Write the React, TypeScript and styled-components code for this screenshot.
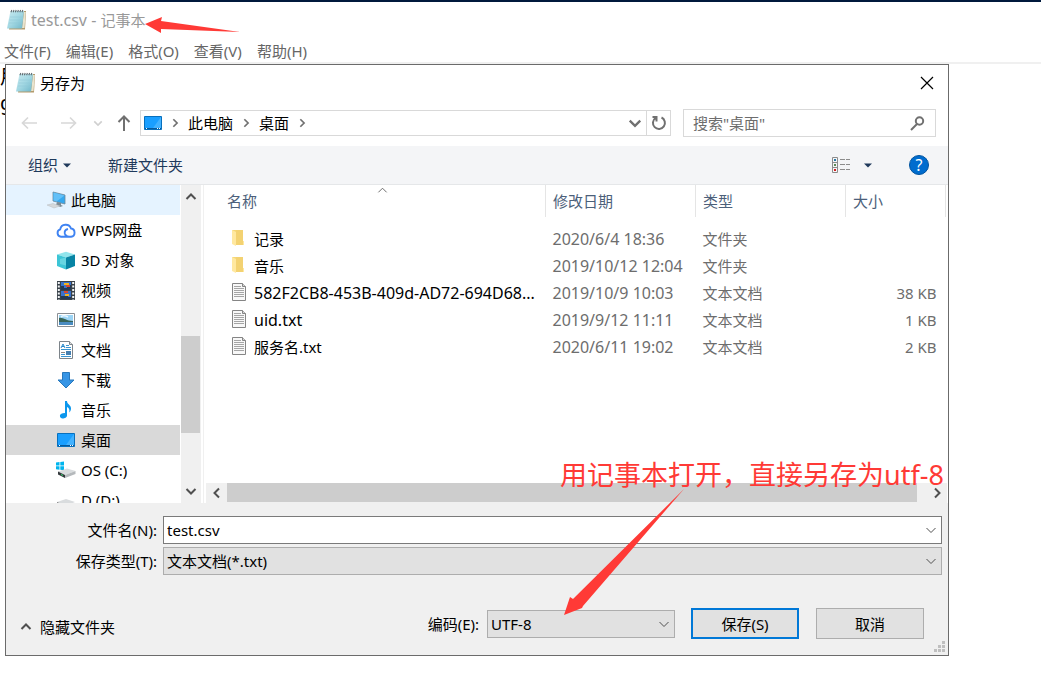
import React from "react";
import styled, { createGlobalStyle, css } from "styled-components";

const Global = createGlobalStyle`
  * { box-sizing: border-box; }
  html, body { margin: 0; background: #fff; }
  body, button, input, select, textarea {
    font-family: "Noto Sans", "Noto Sans CJK SC", sans-serif;
    font-size: 15px;
    line-height: 20px;
    color: #000;
  }
  button { border: 0; background: none; padding: 0; }
  svg { display: block; flex: none; }
`;

const Desktop = styled.div`
  position: relative;
  min-width: 900px;
  min-height: 100vh;
  overflow: hidden;
  border-top: 2px solid #00193c;
`;

const AppTitle = styled.header`
  display: flex;
  align-items: center;
  gap: 4px;
  height: 36px;
  padding-left: 7px;
  color: #999;
  span { white-space: pre; }
`;

const Latin = styled.span`
  font-size: 16px;
`;

const MenuBar = styled.nav`
  display: flex;
  gap: 15px;
  height: 26px;
  padding: 2px 0 0 4px;
  border-bottom: 2px solid #f0f0f0;
  button { color: #666; }
`;

const Editor = styled.textarea`
  display: block;
  width: 100%;
  height: 500px;
  padding: 0;
  border: 0;
  outline: 0;
  resize: none;
  font-size: 20px;
  line-height: 26px;
`;

const Dialog = styled.section`
  position: absolute;
  top: 62px;
  left: 5px;
  right: 92px;
  border: 1px solid #6b6b6b;
  background: #fff;
`;

const DialogTitle = styled.header`
  display: flex;
  align-items: center;
  gap: 4px;
  height: 36px;
  padding: 0 14px 0 10px;
  h1 { flex: 1; margin: 0; font-size: 15px; font-weight: 400; }
`;

const NavRow = styled.div`
  display: flex;
  align-items: center;
  height: 45px;
  padding: 0 12px 1px 14px;
`;

const NavButtons = styled.div`
  display: flex;
  align-items: center;
  gap: 14px;
  width: 120px;
`;

const AddressBar = styled.div`
  display: flex;
  align-items: stretch;
  flex: 1;
  height: 26px;
  border: 1px solid #d9d9d9;
`;

const Crumbs = styled.div`
  display: flex;
  align-items: center;
  flex: 1;
  gap: 8px;
  padding: 0 4px 0 3px;
  > :last-child { margin-left: auto; }
`;

const Refresh = styled.button`
  display: grid;
  place-items: center;
  width: 24px;
  border-left: 1px solid #d9d9d9;
`;

const SearchBox = styled.label`
  display: flex;
  align-items: center;
  width: 253px;
  height: 28px;
  margin-left: 12px;
  padding: 0 10px 0 9px;
  border: 1px solid #d9d9d9;
  input {
    flex: 1;
    min-width: 0;
    padding: 0;
    border: 0;
    outline: 0;
    background: none;
  }
  input::placeholder { color: #6d6d6d; opacity: 1; }
`;

const ToolBar = styled.div`
  display: flex;
  align-items: center;
  height: 39px;
  padding: 0 19px 0 22px;
  border-bottom: 1px solid #e5e7e9;
  background: #f4f5f7;
`;

const ToolButton = styled.button<{ $end?: boolean }>`
  display: flex;
  align-items: center;
  gap: 5px;
  margin-right: 37px;
  color: #1e395b;
  ${(p) => p.$end && css`margin-left: auto; gap: 13px;`}
`;

const HelpButton = styled.button`
  width: 20px;
  height: 20px;
  border: 1px solid #00539f;
  border-radius: 50%;
  background: #006cce;
  color: #fff;
  font-size: 16px;
  line-height: 18px;
`;

const Browser = styled.div`
  display: flex;
  height: 318px;
`;

const Tree = styled.ul`
  width: 174px;
  margin: 0;
  padding: 0;
  overflow: hidden;
  list-style: none;
`;

const TreeItem = styled.li<{ $tone?: string; $root?: boolean }>`
  display: flex;
  align-items: center;
  gap: 5px;
  height: 30px;
  padding-left: ${(p) => (p.$root ? 40 : 50)}px;
  background: ${(p) => p.$tone ?? "none"};
`;

const TreeIconSlot = styled.span`
  display: grid;
  place-items: center;
  width: 20px;
`;

const VScroll = styled.div`
  display: flex;
  flex-direction: column;
  align-items: center;
  width: 20px;
  margin-left: 1px;
  padding: 6px 1px 6px 0;
  background: #f0f0f0;
`;

const VThumb = styled.div`
  width: 19px;
  height: 97px;
  margin: 133px 0 auto;
  background: #cdcdcd;
`;

const Files = styled.div`
  display: flex;
  flex-direction: column;
  flex: 1;
  min-width: 0;
  margin-left: 2px;
  border-left: 1px solid #f0f0f0;
`;

const FileTable = styled.table`
  width: calc(100% - 2px);
  border-collapse: collapse;
  table-layout: fixed;
  th, td { padding: 0 9px 0 7px; font-weight: 400; text-align: left; }
  th {
    position: relative;
    height: 32px;
    border-right: 1px solid #e5e5e5;
    color: #4c607a;
  }
  th:first-child { padding-left: 23px; }
  td { height: 27px; color: #6d6d6d; white-space: nowrap; }
  td:first-child { padding: 0 0 0 27px; color: #000; }
  td:last-child { text-align: right; }
  thead::after { content: ""; display: block; height: 8px; }
`;

const SortMark = styled.span`
  position: absolute;
  top: 0;
  left: calc(50% + 2px);
`;

const FileName = styled.span`
  display: flex;
  align-items: center;
  gap: 7px;
`;

const HScroll = styled.div`
  display: flex;
  align-items: center;
  height: 20px;
  margin: auto 1px 0 2px;
  padding-bottom: 1px;
  background: #f0f0f0;
  button { display: grid; place-items: center; width: 21px; }
`;

const HThumb = styled.div`
  flex: 1;
  height: 19px;
  margin-right: 9px;
  background: #cdcdcd;
`;

const Footer = styled.form`
  position: relative;
  padding: 13px 6px 16px 0;
  background: #f0f0f0;
`;

const Field = styled.div`
  display: flex;
  align-items: center;
  height: 28px;
  margin-bottom: 3px;
  label { width: 157px; padding-right: 6px; text-align: right; }
`;

const Control = styled.div<{ $white?: boolean; $width?: number }>`
  display: flex;
  align-items: center;
  flex: ${(p) => (p.$width ? "none" : 1)};
  width: ${(p) => (p.$width ? `${p.$width}px` : "auto")};
  height: 28px;
  padding-right: 4px;
  border: 1px solid ${(p) => (p.$white ? "#7a7a7a" : "#adadad")};
  background: ${(p) => (p.$white ? "#fff" : "#e1e1e1")};
  input, select {
    flex: 1;
    min-width: 0;
    height: 26px;
    padding: 0 0 0 3px;
    border: 0;
    outline: 0;
    appearance: none;
    background: none;
  }
`;

const Actions = styled.div`
  display: flex;
  align-items: center;
  height: 31px;
  margin-top: 33px;
  padding: 0 18px 0 14px;
  label { margin-right: 8px; }
`;

const HideFolders = styled.button`
  display: flex;
  align-items: center;
  gap: 8px;
  margin: 6px auto 0 0;
`;

const PushButton = styled.button<{ $primary?: boolean }>`
  width: 108px;
  height: 31px;
  margin-left: ${(p) => (p.$primary ? 16 : 17)}px;
  border: ${(p) => (p.$primary ? "2px solid #0078d7" : "1px solid #adadad")};
  background: #e1e1e1;
`;

const Grip = styled.svg`
  position: absolute;
  right: 2px;
  bottom: 2px;
`;

const Note = styled.p`
  position: absolute;
  top: 455px;
  left: 560px;
  margin: 0;
  color: #ff3a36;
  font-size: 27px;
  line-height: 36px;
  white-space: nowrap;
`;

const Arrow = styled.svg`
  position: absolute;
  top: -2px;
  left: 0;
  pointer-events: none;
`;

type ChevronProps = { dir: "up" | "down" | "left" | "right"; size?: number; color?: string; weight?: number };
const turns = { up: 180, down: 0, left: 90, right: 270 };
const Chevron = ({ dir, size = 12, color = "#505050", weight = 2 }: ChevronProps) => (
  <svg width={size} height={size} viewBox="0 0 12 12" fill="none" stroke={color} strokeWidth={weight}>
    <path d="M1.500 4 6 8.500 10.500 4" transform={`rotate(${turns[dir]} 6 6)`} />
  </svg>
);

const Triangle = () => (
  <svg width="8" height="5" viewBox="0 0 8 5"><path d="M0 .5h8L4 4.500z" fill="#1e395b" /></svg>
);

const NotepadIcon = () => (
  <svg width="20" height="22" viewBox="0 0 20 22">
    <defs>
      <linearGradient id="pad" x1="0" y1="0" x2="1" y2="1">
        <stop offset="0" stopColor="#c9eaf0" />
        <stop offset=".5" stopColor="#a3d8e3" />
        <stop offset="1" stopColor="#6fb6c9" />
      </linearGradient>
    </defs>
    <path d="M4 2h15l-1 18.500H2z" fill="#b39a6b" />
    <path d="M17 3h1.800l-1.300 16H15z" fill="#e9e4cf" />
    <path d="M3.500 2H17l-2 17.500H0z" fill="url(#pad)" />
    <path d="M3 8h13M2.500 11h13M2 14h13" stroke="#8cc7d5" strokeWidth=".5" />
    <path d="M4 3.200 4.800 1M6.200 3.200 7 1M8.400 3.200 9.200 1M10.600 3.200l.8-2.200M12.800 3.200l.8-2.200M15 3.200l.8-2.200" stroke="#616b70" strokeWidth="1.100" />
  </svg>
);

const DesktopIcon = () => (
  <svg width="18" height="14" viewBox="0 0 18 14">
    <path d="M.5.5h17v13H.5z" fill="#1a9fff" stroke="#0870bd" />
    <path d="m17 1-8 11h8z" fill="#43b2ff" />
    <path d="M1 12.500h16" stroke="#07599b" />
    <path d="M2 12.500h1M13 12.500h1M15 12.500h1" stroke="#fff" />
  </svg>
);

const treeIcons: Record<string, React.ReactNode> = {
  pc: (
    <>
      <path d="m6 1 12 3v9L6 10z" fill="#35a8ef" stroke="#6f8898" strokeWidth=".8" />
      <path d="m6.500 1.500 11 3-8 6-3-1z" fill="#62c0f8" />
      <path d="m10 11 4 1v2l2 1-3 1-4-2z" fill="#7c8b94" />
      <path d="m0 14 6-1.500 7 2.500-6 2z" fill="#d5d8da" stroke="#b8bcc0" strokeWidth=".5" />
    </>
  ),
  cloud: (
    <>
      <path d="M12 15.800H4a3.800 3.800 0 0 1-.8-7.400A5.600 5.600 0 0 1 14 7.500a4.200 4.200 0 0 1 0 8.300H12c-2 0-3.200-1-4.200-2.800" fill="none" stroke="#3f83f2" strokeWidth="1.900" />
      <path d="M7.800 13c-.5-2.500 1-4.500 3.200-5" fill="none" stroke="#3f83f2" strokeWidth="1.800" />
    </>
  ),
  cube: (
    <>
      <path d="m0 3.500 9-2.800 9 2.800-9 3z" fill="#91e5ec" />
      <path d="m0 3.500 9 3V18.500l-9-3.500z" fill="#3cc5d6" />
      <path d="m18 3.500-9 3V18.500l9-3.500z" fill="#0784a4" />
      <path d="m3 8 6-1.500v8L3 13z" fill="#78dbe5" opacity=".7" />
    </>
  ),
  video: (
    <>
      <path d="M0 0h18v19H0z" fill="#39424a" />
      <path d="M4 1h10v8H4zM4 10h10v8H4z" fill="#3a72cb" />
      <path d="M4 5h3v2h3V4h4v5H4zM4 15h4v-2h3v3h3v2H4z" fill="#243a54" />
      <path d="M7 2h5v2H7zM8 13h4v2H8z" fill="#f1b51f" />
      <path d="M9 4h4v2H9zM7 10h4v2H7z" fill="#d64632" />
      <path d="M1.800 1v18M16.200 1v18" stroke="#f1f3f4" strokeWidth="2" strokeDasharray="2 1.500" />
    </>
  ),
  picture: (
    <>
      <path d="M.5 2.500h17v13H.5z" fill="#fff" stroke="#8a8f94" />
      <path d="M2 4h14v10H2z" fill="#9bd4f5" />
      <path d="M2 7c4-1 7 3 14 3v2H2z" fill="#376458" />
      <path d="M2 11h14v3H2z" fill="#4a8cc1" />
      <path d="M4 6c2-2 5-1 7 0" stroke="#e8f7ff" strokeWidth="1.500" fill="none" />
    </>
  ),
  document: (
    <>
      <path d="M2.500.5h10l3 3v14h-13z" fill="#fff" stroke="#7d848a" />
      <path d="M12.500.5v3h3" fill="#ddd" stroke="#7d848a" />
      <path d="m4 7 2-4 2 4M5 5.500h2" fill="none" stroke="#2688ca" />
      <path d="M9 4.500h3M9 6.500h5M4 8.500h10M4 13.500h4M4 15.500h10" stroke="#3a95d1" />
      <path d="M4 11.500h4" stroke="#888" /><path d="M9 10h5v4H9z" fill="#457fb0" />
    </>
  ),
  download: <path d="M5.500 1.500h7V9H17l-8 8-8-8h4.500z" fill="#3795e5" stroke="#2878bc" />,
  music: (
    <>
      <path d="M8 0h2c0 3.500 4.500 4 4 8-.2 2-1.200 3-1.700 3.500.5-3-.3-4.500-2.300-5.500v9H8z" fill="#0c97ed" />
      <ellipse cx="6.500" cy="14.800" rx="3.600" ry="2.600" fill="#0c97ed" transform="rotate(-15 6.500 14.800)" />
    </>
  ),
  windrive: (
    <>
      <path d="M-1 1.500 2.500 1v3.500H-1zM3.300.9 7 .4v4.100H3.300zM-1 5.300h3.500v3.500L-1 8.300zM3.300 5.300H7v4l-3.700-.5z" fill="#00b5ee" />
      <path d="m1 10.500 9-3 8.500 2.500L8 14z" fill="#d9dcde" />
      <path d="m1 10.500 7 3.500v3l-7-3.500z" fill="#34393c" />
      <path d="m8 14 10.500-4v3L8 17z" fill="#b5b9bc" />
      <path d="m4 13.500 2 .9" stroke="#35df72" />
    </>
  ),
  drive: (
    <>
      <path d="m0 11 9-3 9 3-9 4z" fill="#d9dcde" />
      <path d="m0 11 9 4v3l-9-4z" fill="#777" />
    </>
  ),
};

const TreeIcon = ({ kind }: { kind: string }) => (
  <svg width="20" height="20" viewBox="-1 -1 20 20">{treeIcons[kind]}</svg>
);

const FolderIcon = () => (
  <svg width="16" height="20" viewBox="0 0 16 20">
    <path d="M1 1h11v14l1-1v2H4z" fill="#f5d777" />
    <path d="M5 1h7v15H5z" fill="#f3d272" />
    <path d="m1 1 4 2v14l-4-2z" fill="#ffe8a0" />
    <path d="M12 12h1v4h-1z" fill="#ffe8a0" />
  </svg>
);

const TextFileIcon = () => (
  <svg width="16" height="20" viewBox="0 0 16 20">
    <path d="M1.500.5h10l3 3v14h-13z" fill="#f8f8f8" stroke="#858585" />
    <path d="M11.500.5v3h3" fill="#d5d5d5" stroke="#858585" />
    <path d="M3 3.500h7M3 5.500h10M3 7.500h10M3 9.500h10M3 11.500h10M3 13.500h10" stroke="#a5a5a5" />
  </svg>
);

const places = [
  { icon: "pc", name: "此电脑", root: true, tone: "#e5f3ff" },
  { icon: "cloud", name: "WPS网盘" },
  { icon: "cube", name: "3D 对象" },
  { icon: "video", name: "视频" },
  { icon: "picture", name: "图片" },
  { icon: "document", name: "文档" },
  { icon: "download", name: "下载" },
  { icon: "music", name: "音乐" },
  { icon: "desktop", name: "桌面", tone: "#d9d9d9" },
  { icon: "windrive", name: "OS (C:)" },
  { icon: "drive", name: "D (D:)" },
];

const files = [
  { name: "记录", date: "2020/6/4 18:36", type: "文件夹", size: "" },
  { name: "音乐", date: "2019/10/12 12:04", type: "文件夹", size: "" },
  { name: "582F2CB8-453B-409d-AD72-694D68...", date: "2019/10/9 10:03", type: "文本文档", size: "38 KB", latin: true },
  { name: "uid.txt", date: "2019/9/12 11:11", type: "文本文档", size: "1 KB", latin: true },
  { name: "服务名.txt", date: "2020/6/11 19:02", type: "文本文档", size: "2 KB" },
];

export default function App() {
  return (
    <Desktop>
      <Global />
      <AppTitle><NotepadIcon /><span><Latin>test.csv - </Latin>记事本</span></AppTitle>
      <MenuBar>
        {["文件(F)", "编辑(E)", "格式(O)", "查看(V)", "帮助(H)"].map((m) => <button key={m}>{m}</button>)}
      </MenuBar>
      <Editor aria-label="文本" defaultValue={"用\ng"} spellCheck={false} />

      <Dialog role="dialog" aria-labelledby="dialog-title">
        <DialogTitle>
          <NotepadIcon />
          <h1 id="dialog-title">另存为</h1>
          <button aria-label="关闭">
            <svg width="14" height="14" viewBox="0 0 14 14" stroke="#000" strokeWidth="1.200"><path d="m1 1 12 12M13 1 1 13" /></svg>
          </button>
        </DialogTitle>

        <NavRow>
          <NavButtons>
            <button aria-label="后退">
              <svg width="19" height="16" viewBox="0 0 19 16" fill="none" stroke="#d8d8d8" strokeWidth="1.700"><path d="M17 8H2M8 2.500 2.500 8 8 13.500" /></svg>
            </button>
            <button aria-label="前进">
              <svg width="26" height="16" viewBox="0 0 26 16" fill="none" stroke="#d8d8d8" strokeWidth="1.700"><path d="M8 8h15M17 2.500 22.500 8 17 13.500" /></svg>
            </button>
            <button aria-label="最近位置"><Chevron dir="down" size={10} color="#d0d0d0" /></button>
            <button aria-label="上移">
              <svg width="14" height="18" viewBox="0 0 14 18" fill="none" stroke="#707070" strokeWidth="2"><path d="M7 17V3M1.500 8 7 2.500 12.500 8" /></svg>
            </button>
          </NavButtons>
          <AddressBar>
            <Crumbs>
              <DesktopIcon />
              <Chevron dir="right" size={10} color="#707070" />
              <button>此电脑</button>
              <Chevron dir="right" size={10} color="#707070" />
              <button>桌面</button>
              <Chevron dir="right" size={10} color="#707070" />
              <button aria-label="展开"><Chevron dir="down" size={14} color="#707070" /></button>
            </Crumbs>
            <Refresh aria-label="刷新">
              <svg width="16" height="16" viewBox="0 0 16 16" fill="none" stroke="#707070" strokeWidth="2"><path d="M10.500 2.500a6 6 0 1 1-6 .5M1.500 2h4v4.500" /></svg>
            </Refresh>
          </AddressBar>
          <SearchBox>
            <input aria-label="搜索" placeholder={'搜索"桌面"'} />
            <svg width="15" height="15" viewBox="0 0 15 15" fill="none" stroke="#707070" strokeWidth="2"><circle cx="9.500" cy="5" r="3.700" /><path d="M7 8 1 14" /></svg>
          </SearchBox>
        </NavRow>

        <ToolBar>
          <ToolButton>组织<Triangle /></ToolButton>
          <ToolButton>新建文件夹</ToolButton>
          <ToolButton $end aria-label="视图">
            <svg width="19" height="16" viewBox="0 0 19 16" fill="none" stroke="#8c8c8c">
              <path d="M.5.500h5v15h-5zM.5 5.500h5M.5 10.500h5M8 2.500h5M14 2.500h4M8 7.500h5M14 7.500h4M8 12.500h5M14 12.500h4" />
              <path d="M2 3h2" stroke="#2679a8" strokeWidth="2" /><path d="M2 8h2" stroke="#5b8a55" strokeWidth="2" /><path d="M2 13h2" stroke="#d02020" strokeWidth="2" />
            </svg>
            <Triangle />
          </ToolButton>
          <HelpButton aria-label="帮助">?</HelpButton>
        </ToolBar>

        <Browser>
          <Tree>
            {places.map((p) => (
              <TreeItem key={p.name} $root={p.root} $tone={p.tone}>
                <TreeIconSlot>{p.icon === "desktop" ? <DesktopIcon /> : <TreeIcon kind={p.icon} />}</TreeIconSlot>
                {p.name}
              </TreeItem>
            ))}
          </Tree>
          <VScroll>
            <Chevron dir="up" />
            <VThumb />
            <Chevron dir="down" />
          </VScroll>
          <Files>
            <FileTable>
              <colgroup><col /><col width="150" /><col width="150" /><col width="100" /></colgroup>
              <thead>
                <tr>
                  <th>名称<SortMark><Chevron dir="up" size={11} color="#606060" weight={1} /></SortMark></th>
                  <th>修改日期</th><th>类型</th><th>大小</th>
                </tr>
              </thead>
              <tbody>
                {files.map((f) => (
                  <tr key={f.name}>
                    <td>
                      <FileName>
                        {f.type === "文件夹" ? <FolderIcon /> : <TextFileIcon />}
                        {f.latin ? <Latin>{f.name}</Latin> : f.name}
                      </FileName>
                    </td>
                    <td><Latin>{f.date}</Latin></td><td>{f.type}</td><td>{f.size}</td>
                  </tr>
                ))}
              </tbody>
            </FileTable>
            <HScroll>
              <button aria-label="向左滚动"><Chevron dir="left" /></button>
              <HThumb />
              <button aria-label="向右滚动"><Chevron dir="right" /></button>
            </HScroll>
          </Files>
        </Browser>

        <Footer onSubmit={(e) => e.preventDefault()}>
          <Field>
            <label htmlFor="name">文件名(N):</label>
            <Control $white><input id="name" defaultValue="test.csv" /><Chevron dir="down" weight={1} /></Control>
          </Field>
          <Field>
            <label htmlFor="type">保存类型(T):</label>
            <Control><select id="type"><option>文本文档(*.txt)</option></select><Chevron dir="down" weight={1} /></Control>
          </Field>
          <Actions>
            <HideFolders type="button"><Chevron dir="up" />隐藏文件夹</HideFolders>
            <label htmlFor="encoding">编码(E):</label>
            <Control $width={188}><select id="encoding"><option>UTF-8</option></select><Chevron dir="down" weight={1} /></Control>
            <PushButton $primary>保存(S)</PushButton>
            <PushButton type="button">取消</PushButton>
          </Actions>
          <Grip width="12" height="12" viewBox="0 0 12 12" fill="#bfbfbf">
            <path d="M8 0h3v3H8zM4 4h3v3H4zM8 4h3v3H8zM0 8h3v3H0zM4 8h3v3H4zM8 8h3v3H8z" />
          </Grip>
        </Footer>
      </Dialog>

      <Note>用记事本打开，直接另存为utf-8</Note>
      <Arrow width="1041" height="680" viewBox="0 0 1041 680" fill="#ff3a36">
        <path d="m145 24 17-7-1 4 79 11-79-3 0 4z" />
        <path d="m684 489-101 117-1 2-18 7 6-18 3 2z" />
      </Arrow>
    </Desktop>
  );
}
